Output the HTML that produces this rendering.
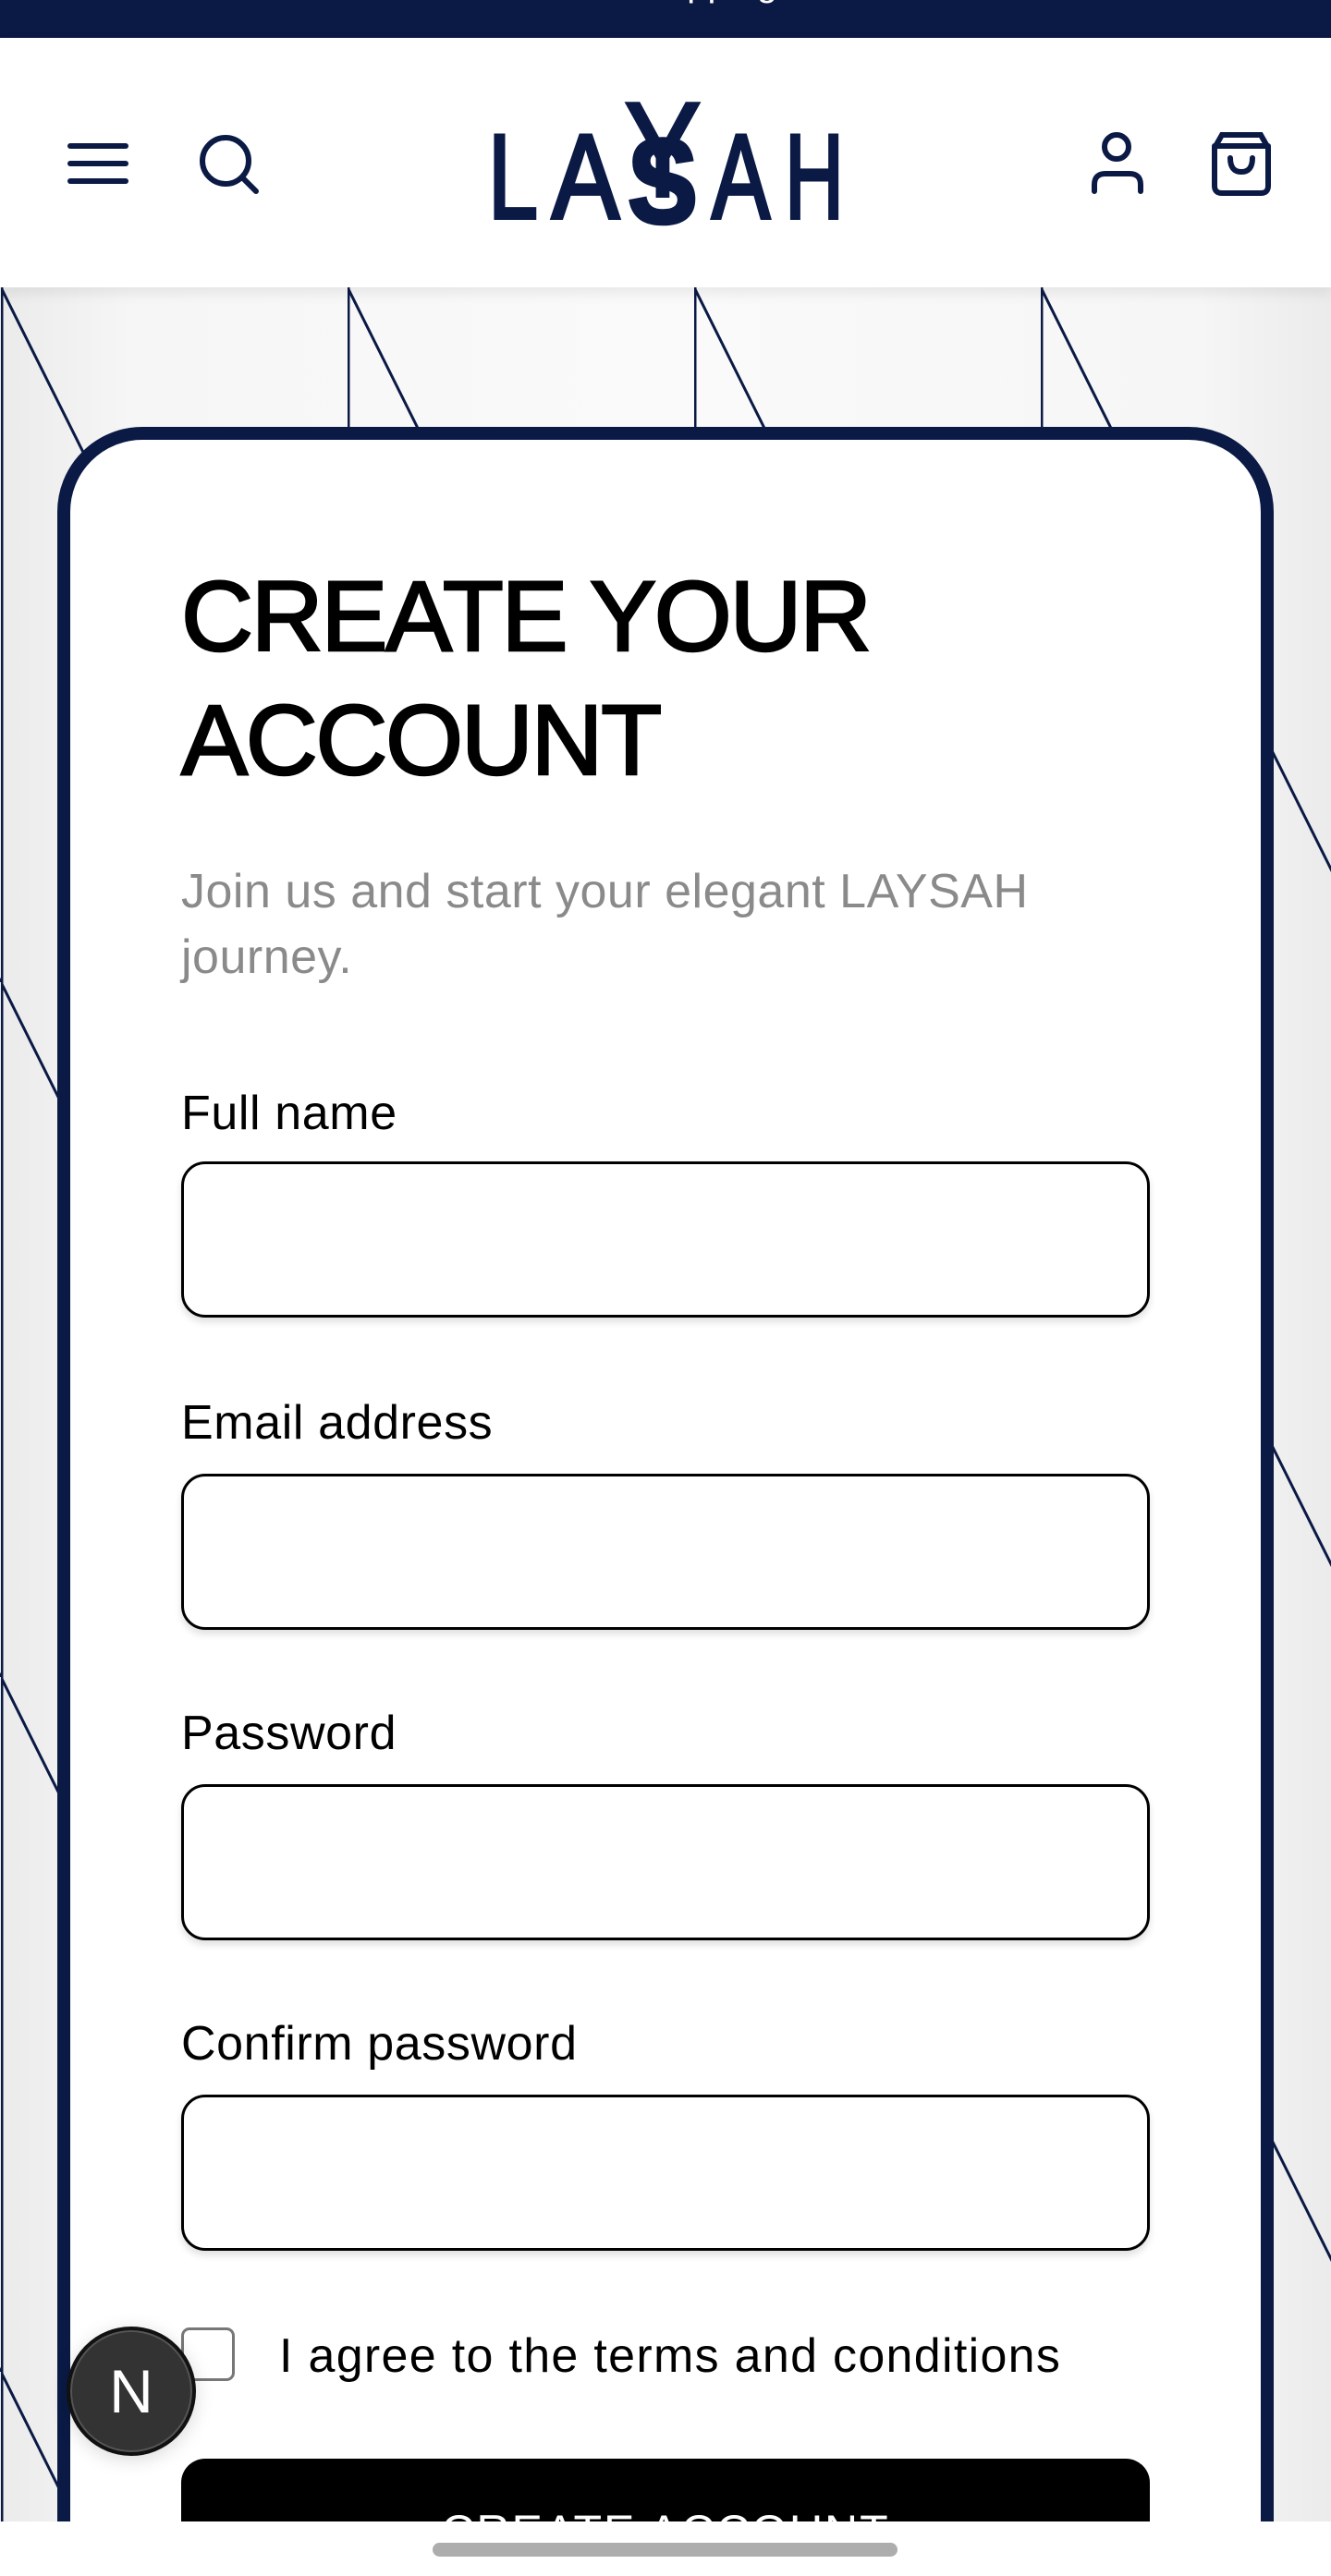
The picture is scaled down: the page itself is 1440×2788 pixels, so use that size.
<!DOCTYPE html>
<html><head><meta charset="utf-8">
<style>
*{margin:0;padding:0;box-sizing:border-box}
html,body{width:1440px;height:2788px;overflow:hidden}
body{position:relative;background:#f1f1f1;font-family:"Liberation Sans",sans-serif}
.bg{position:absolute;left:0;top:311px;width:1440px;height:2418px;
background:linear-gradient(90deg,#ebebeb 0%,#f6f6f6 10%,#fafafa 50%,#f6f6f6 90%,#ebebeb 100%)}
.abs{position:absolute}
.topbar{left:0;top:0;width:1440px;height:41px;background:#0a1a45;overflow:hidden}
.header{left:0;top:41px;width:1440px;height:270px;background:#fff;box-shadow:0 6px 14px rgba(0,0,0,0.08)}
.card{left:62px;top:462px;width:1316px;height:2400px;background:#fff;border:14px solid #0a1a45;border-radius:92px}
h1{position:absolute;left:196px;top:600px;font-size:108px;line-height:134px;font-weight:normal;color:#000;letter-spacing:-2.3px;-webkit-text-stroke:2.5px #000;white-space:nowrap}
.sub{left:196px;top:930px;font-size:52px;line-height:71px;color:#8a8a8a;width:1000px;letter-spacing:0.5px}
.lbl{position:absolute;left:196px;font-size:52px;line-height:60px;color:#000;white-space:nowrap;letter-spacing:0.6px}
.inp{position:absolute;left:196px;width:1048px;height:169px;border:3px solid #000;border-radius:26px;background:#fff;box-shadow:0 5px 8px rgba(0,0,0,0.12)}
.bottom{left:0;top:2729px;width:1440px;height:59px;background:#fff}
</style></head><body>
<div class="bg"></div>
<svg class="abs" style="left:0;top:311px" width="1440" height="2418">
<defs><pattern id="p" x="0" y="0" width="375" height="752" patternUnits="userSpaceOnUse" patternTransform="translate(1,0)">
<line x1="1" y1="0" x2="1" y2="752" stroke="#0a1a45" stroke-width="3"/>
<line x1="0" y1="0" x2="375" y2="752" stroke="#0a1a45" stroke-width="3"/>
</pattern></defs>
<rect width="1440" height="2418" fill="url(#p)"/>
</svg>
<div class="abs topbar"><div style="position:absolute;left:0;width:1440px;top:-40px;text-align:center;color:#fff;font-size:40px">Free shipping</div></div>
<div class="abs header"></div>
<svg class="abs" style="left:0;top:0" width="1440" height="311">
<g stroke="#0a1a45" stroke-width="6" stroke-linecap="round" fill="none">
<line x1="76" y1="158" x2="136" y2="158"/><line x1="76" y1="177" x2="136" y2="177"/><line x1="76" y1="196" x2="136" y2="196"/>
<circle cx="244" cy="174" r="25"/><line x1="263" y1="193" x2="277" y2="207"/>
<circle cx="1208" cy="159" r="13"/><path d="M1184 207 V200 Q1184 188 1196 188 H1222 Q1234 188 1234 200 V207"/>
<path d="M1314 160 V201 Q1314 209 1322 209 H1364 Q1372 209 1372 201 V160 L1364 146 H1322 Z"/><line x1="1314" y1="158" x2="1372" y2="158"/>
<path d="M1331 171 Q1331 186 1343 186 Q1355 186 1355 171"/>
</g>
<g fill="#0a1a45" stroke="#0a1a45" stroke-width="4" font-family="Liberation Sans, sans-serif" font-size="130">
<text x="528" y="236" textLength="54" lengthAdjust="spacingAndGlyphs">L</text>
<text x="597" y="236" textLength="73" lengthAdjust="spacingAndGlyphs">A</text>
<text x="679" y="241" textLength="76" lengthAdjust="spacingAndGlyphs" font-weight="bold">S</text>
<text x="770" y="236" textLength="63" lengthAdjust="spacingAndGlyphs">A</text>
<text x="849" y="236" textLength="64" lengthAdjust="spacingAndGlyphs">H</text>
<text x="676" y="212" font-size="145" textLength="82" lengthAdjust="spacingAndGlyphs">Y</text>
</g>
</svg>
<div class="abs card"></div>
<h1>CREATE YOUR<br>ACCOUNT</h1>
<div class="abs sub">Join us and start your elegant LAYSAH journey.</div>
<div class="lbl" style="top:1175px">Full name</div>
<div class="inp" style="top:1257px"></div>
<div class="lbl" style="top:1510px">Email address</div>
<div class="inp" style="top:1595px"></div>
<div class="lbl" style="top:1846px">Password</div>
<div class="inp" style="top:1931px"></div>
<div class="lbl" style="top:2182px">Confirm password</div>
<div class="inp" style="top:2267px"></div>
<div class="abs" style="left:196px;top:2519px;width:58px;height:58px;border:3px solid #777;border-radius:9px;background:#fff"></div>
<div class="lbl" style="left:302px;top:2520px;letter-spacing:1.3px">I agree to the terms and conditions</div>
<div class="abs" style="left:196px;top:2661px;width:1048px;height:200px;background:#000;border-radius:26px;color:#fff;font-size:50px;text-align:center;padding-top:50px;letter-spacing:2px">CREATE ACCOUNT</div>
<div class="abs" style="left:72px;top:2518px;width:140px;height:140px;border-radius:50%;background:#333;border:4px solid #111;box-shadow:0 0 0 2px #555 inset,0 4px 20px rgba(0,0,0,0.15);color:#fff;font-size:66px;line-height:132px;text-align:center">N</div>
<div class="abs bottom"></div>
<div class="abs" style="left:468px;top:2752px;width:503px;height:15px;border-radius:8px;background:#adadad"></div>
</body></html>
